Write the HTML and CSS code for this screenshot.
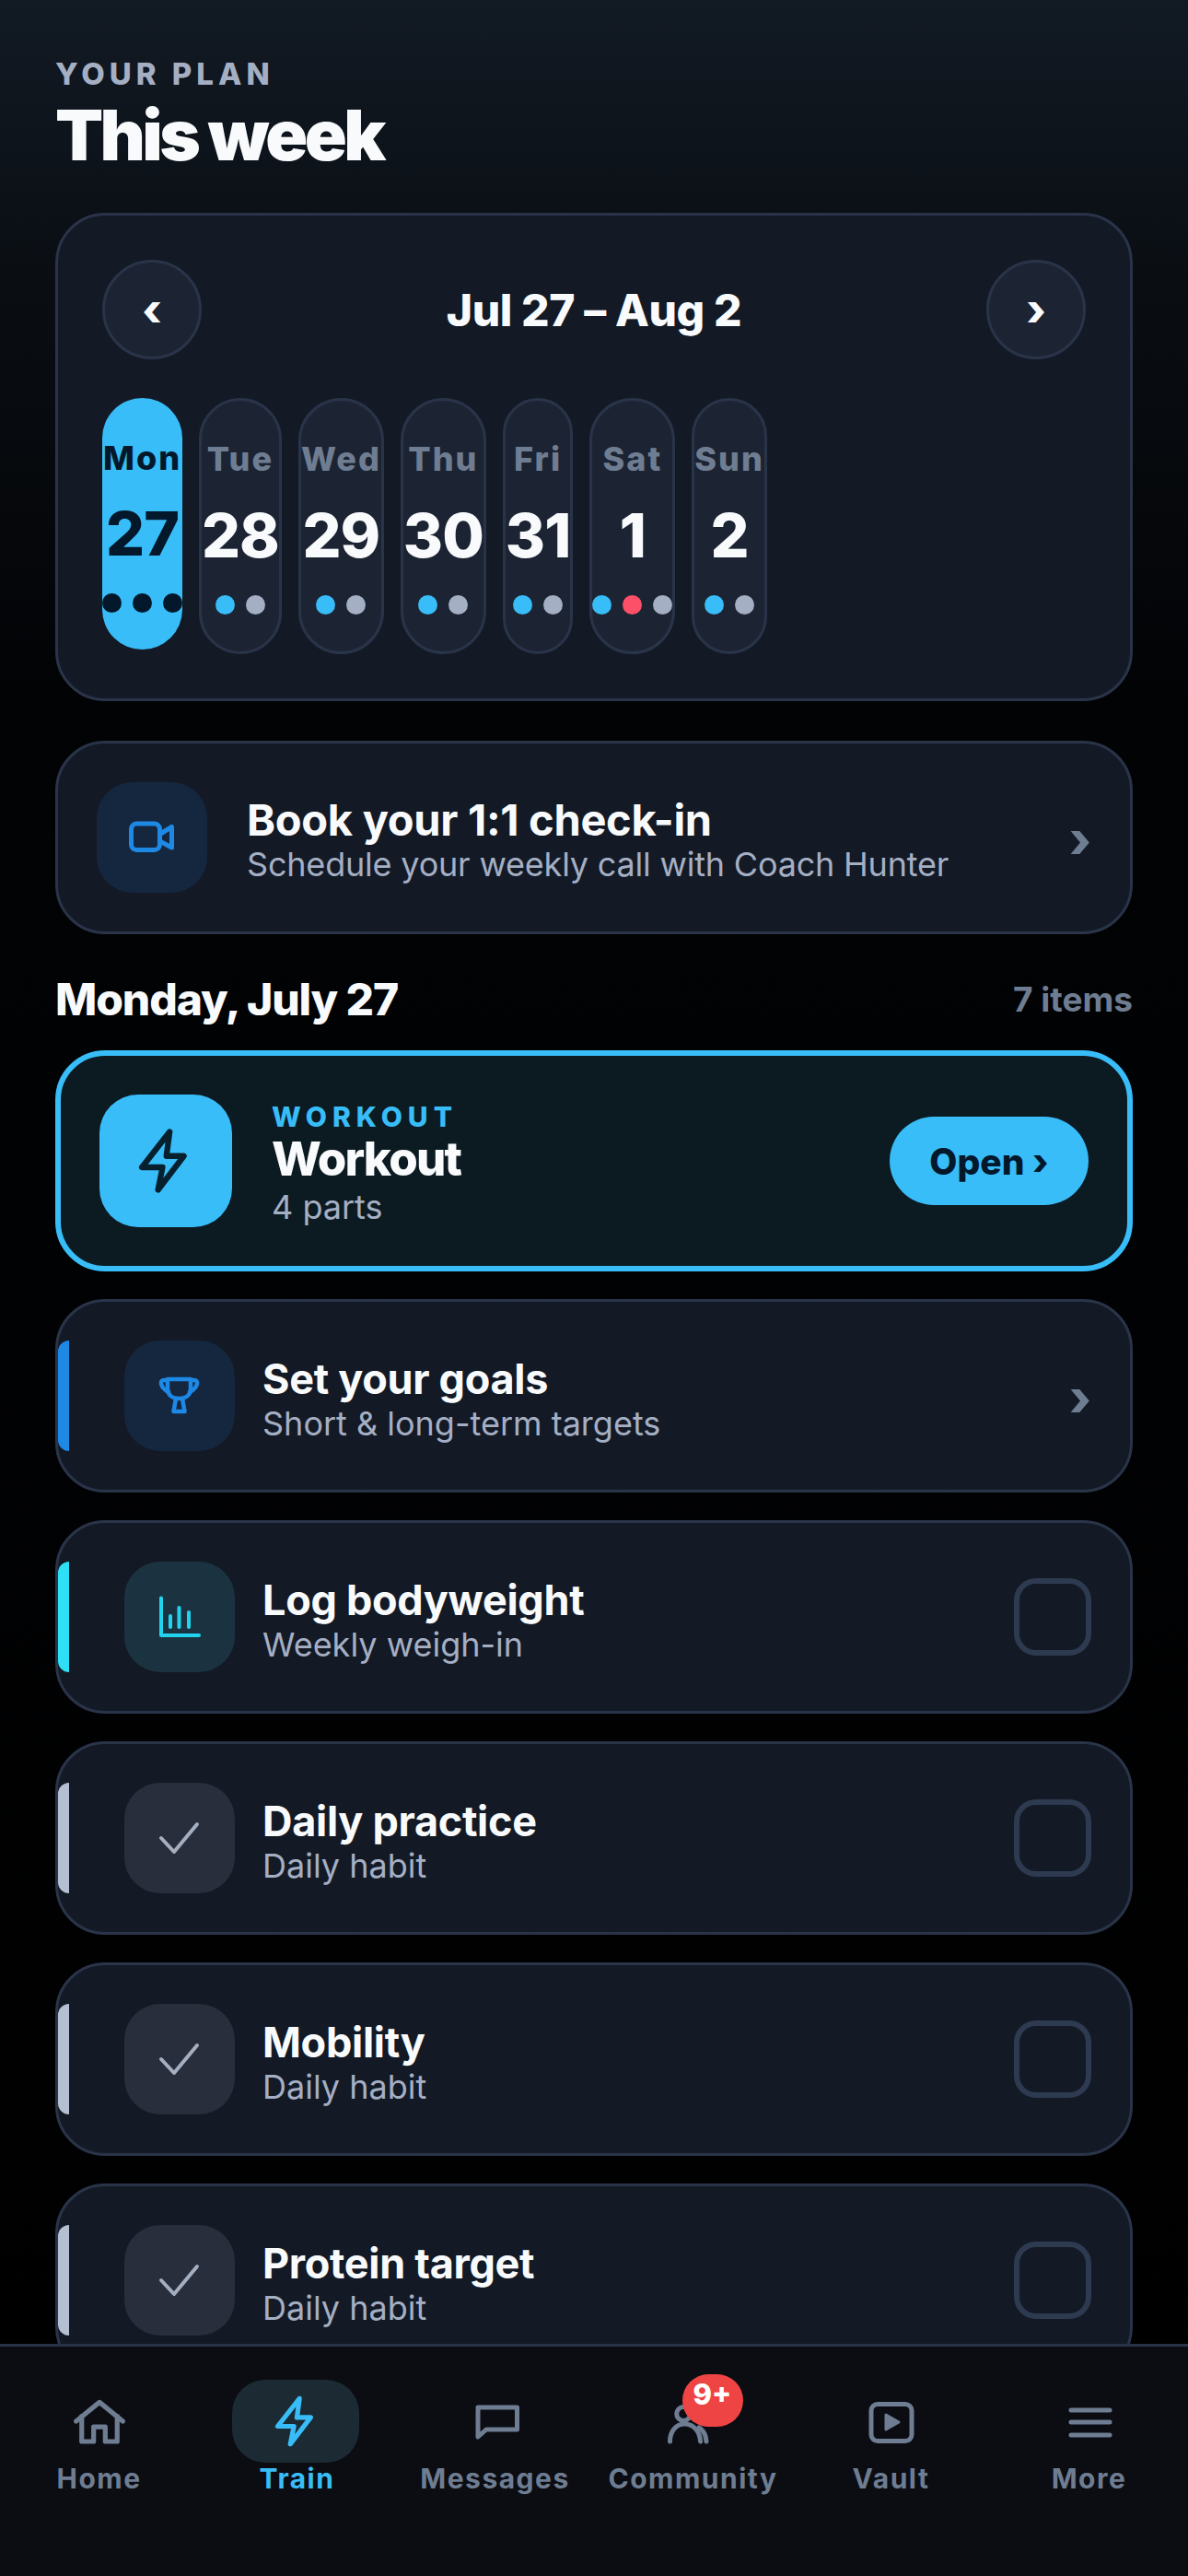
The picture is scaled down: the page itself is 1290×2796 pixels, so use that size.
FILE: index.html
```html
<!DOCTYPE html>
<html lang="en">
<head>
  <meta charset="UTF-8" />
  <meta name="viewport" content="width=device-width, initial-scale=1.0"/>
  <title>Your plan - This week</title>
  <link rel="stylesheet" href="styles.css">
</head>
<body>
  <div class="page">
    <main class="content">
      <header class="top">
        <p class="eyebrow">YOUR PLAN</p>
        <h1>This week</h1>
      </header>

      <section class="card week-card">
        <div class="week-nav">
          <button class="nav-btn">‹</button>
          <h2>Jul 27 – Aug 2</h2>
          <button class="nav-btn">›</button>
        </div>
        <div class="week">
          <div class="day active">
            <span class="day-name">Mon</span>
            <span class="day-num">27</span>
            <span class="dots"><i></i><i></i><i></i></span>
          </div>
          <div class="day">
            <span class="day-name">Tue</span>
            <span class="day-num">28</span>
            <span class="dots"><i class="blue"></i><i class="grey"></i></span>
          </div>
          <div class="day">
            <span class="day-name">Wed</span>
            <span class="day-num">29</span>
            <span class="dots"><i class="blue"></i><i class="grey"></i></span>
          </div>
          <div class="day">
            <span class="day-name">Thu</span>
            <span class="day-num">30</span>
            <span class="dots"><i class="blue"></i><i class="grey"></i></span>
          </div>
          <div class="day">
            <span class="day-name">Fri</span>
            <span class="day-num">31</span>
            <span class="dots"><i class="blue"></i><i class="grey"></i></span>
          </div>
          <div class="day">
            <span class="day-name">Sat</span>
            <span class="day-num">1</span>
            <span class="dots"><i class="blue"></i><i class="red"></i><i class="grey"></i></span>
          </div>
          <div class="day">
            <span class="day-name">Sun</span>
            <span class="day-num">2</span>
            <span class="dots"><i class="blue"></i><i class="grey"></i></span>
          </div>
        </div>
      </section>

      <section class="card row book">
        <div class="icon icon-blue">
          <svg width="60" height="60" viewBox="0 0 60 60" fill="none" stroke="#1e88e5" stroke-width="5" stroke-linecap="round" stroke-linejoin="round">
            <rect x="7.5" y="15" width="31" height="28.5" rx="6"/>
            <path d="M38.5 26.5 51.5 18.5v22.5l-13-7"/>
          </svg>
        </div>
        <div class="row-text">
          <h3>Book your 1:1 check-in</h3>
          <p>Schedule your weekly call with Coach Hunter</p>
        </div>
        <span class="chev">›</span>
      </section>

      <div class="day-head">
        <h2>Monday, July 27</h2>
        <span>7 items</span>
      </div>

      <section class="workout">
        <div class="workout-icon">
          <svg width="84" height="84" viewBox="0 0 24 24" fill="none" stroke="#06202e" stroke-width="1.8" stroke-linecap="round" stroke-linejoin="round">
            <path d="M13.2 3 4.6 14H11l-1.4 7 8-10.5h-5.4z"/>
          </svg>
        </div>
        <div class="workout-text">
          <span class="tag">WORKOUT</span>
          <h3>Workout</h3>
          <p>4 parts</p>
        </div>
        <button class="open-btn">Open ›</button>
      </section>

      <section class="card row task">
        <span class="bar bar-blue"></span>
        <div class="icon icon-blue">
          <svg width="60" height="60" viewBox="0 0 60 60" fill="none" stroke="#1e88e5" stroke-width="4.5" stroke-linecap="round" stroke-linejoin="round">
            <path d="M17 12H42V22C42 29 37 33 29.5 33S17 29 17 22Z"/>
            <path d="M17 13H13C10.5 13 9.5 15 10 17C11 21 14 24 18 26"/>
            <path d="M42 13H46C48.5 13 49.5 15 49 17C48 21 45 24 41 26"/>
            <path d="M26 33 23.5 47H35.5L33 33"/>
          </svg>
        </div>
        <div class="row-text">
          <h3>Set your goals</h3>
          <p>Short &amp; long-term targets</p>
        </div>
        <span class="chev">›</span>
      </section>

      <section class="card row task">
        <span class="bar bar-cyan"></span>
        <div class="icon icon-cyan">
          <svg width="60" height="60" viewBox="0 0 60 60" fill="none" stroke="#22d3ee" stroke-width="4" stroke-linecap="round" stroke-linejoin="round">
            <path d="M10 9.5V50H51"/>
            <path d="M20 29V41M29.5 20V41M40 25V41"/>
          </svg>
        </div>
        <div class="row-text">
          <h3>Log bodyweight</h3>
          <p>Weekly weigh-in</p>
        </div>
        <span class="check"></span>
      </section>

      <section class="card row task">
        <span class="bar bar-grey"></span>
        <div class="icon icon-grey">
          <svg width="60" height="60" viewBox="0 0 60 60" fill="none" stroke="#a5afc0" stroke-width="4" stroke-linecap="round" stroke-linejoin="round">
            <path d="M10 30 24 45 49 15"/>
          </svg>
        </div>
        <div class="row-text">
          <h3>Daily practice</h3>
          <p>Daily habit</p>
        </div>
        <span class="check"></span>
      </section>

      <section class="card row task">
        <span class="bar bar-grey"></span>
        <div class="icon icon-grey">
          <svg width="60" height="60" viewBox="0 0 60 60" fill="none" stroke="#a5afc0" stroke-width="4" stroke-linecap="round" stroke-linejoin="round">
            <path d="M10 30 24 45 49 15"/>
          </svg>
        </div>
        <div class="row-text">
          <h3>Mobility</h3>
          <p>Daily habit</p>
        </div>
        <span class="check"></span>
      </section>

      <section class="card row task">
        <span class="bar bar-grey"></span>
        <div class="icon icon-grey">
          <svg width="60" height="60" viewBox="0 0 60 60" fill="none" stroke="#a5afc0" stroke-width="4" stroke-linecap="round" stroke-linejoin="round">
            <path d="M10 30 24 45 49 15"/>
          </svg>
        </div>
        <div class="row-text">
          <h3>Protein target</h3>
          <p>Daily habit</p>
        </div>
        <span class="check"></span>
      </section>
    </main>

    <nav class="tabs">
      <div class="tab">
        <div class="tab-icon">
          <svg width="66" height="66" viewBox="0 0 24 24" fill="none" stroke="currentColor" stroke-width="1.9" stroke-linecap="round" stroke-linejoin="round">
            <path d="M2.8 12 12 4.5l9.2 7.5"/>
            <path d="M5 10v10h4.7v-5.8h4.6V20H19V10"/>
          </svg>
        </div>
        <span>Home</span>
      </div>
      <div class="tab on">
        <div class="tab-icon">
          <svg width="66" height="66" viewBox="0 0 24 24" fill="none" stroke="currentColor" stroke-width="1.9" stroke-linecap="round" stroke-linejoin="round">
            <path d="M12.8 3 4.2 14h6.4l-1.4 7 8-10.5h-5.4z"/>
          </svg>
        </div>
        <span>Train</span>
      </div>
      <div class="tab">
        <div class="tab-icon">
          <svg width="66" height="66" viewBox="0 0 66 66" fill="none" stroke="currentColor" stroke-width="5" stroke-linecap="round" stroke-linejoin="round">
            <path d="M14 18H56.5V42H23L14 50Z"/>
          </svg>
        </div>
        <span>Messages</span>
      </div>
      <div class="tab">
        <div class="tab-icon">
          <svg width="66" height="66" viewBox="0 0 66 66" fill="none" stroke="currentColor" stroke-width="5" stroke-linecap="round" stroke-linejoin="round">
            <circle cx="22.2" cy="25" r="7.5"/>
            <path d="M7.5 55C7.5 44 14 36 23.5 36S40 44 40.5 55"/>
            <path d="M39 40C44 43 46.5 48 47 55"/>
          </svg>
          <span class="badge">9+</span>
        </div>
        <span>Community</span>
      </div>
      <div class="tab">
        <div class="tab-icon">
          <svg width="66" height="66" viewBox="0 0 66 66" fill="none" stroke="currentColor" stroke-width="5" stroke-linecap="round" stroke-linejoin="round">
            <rect x="11" y="14.5" width="44" height="40" rx="7"/>
            <path d="M27 26 41 34 27 42Z" fill="currentColor" stroke-width="3"/>
          </svg>
        </div>
        <span>Vault</span>
      </div>
      <div class="tab">
        <div class="tab-icon">
          <svg width="66" height="66" viewBox="0 0 66 66" fill="none" stroke="currentColor" stroke-width="5" stroke-linecap="round">
            <path d="M13 21H55M13 34H55M13 48H55"/>
          </svg>
        </div>
        <span>More</span>
      </div>
    </nav>
  </div>
</body>
</html>
```

FILE: styles.css
```css
* {
  margin: 0;
  padding: 0;
  box-sizing: border-box;
  font-family: Inter, "Noto Sans", sans-serif;
}

body {
  background-color: #000;
  color: #f8fafc;
}

.page {
  display: flex;
  flex-direction: column;
  height: 2796px;
  overflow: hidden;
  background: linear-gradient(180deg, #121a24 0, #0a0e13 300px, #020305 760px, #000 100%);
}

.content {
  flex: 1;
  min-height: 0;
  overflow: hidden;
  padding: 60px 60px 0;
}

.top {
  margin-bottom: 42px;
}

.eyebrow {
  font-size: 33px;
  line-height: 40px;
  font-weight: 800;
  letter-spacing: 5px;
  color: #a5afc4;
}

.top h1 {
  margin-top: 3px;
  font-size: 76px;
  line-height: 86px;
  font-weight: 900;
  letter-spacing: -3.6px;
  color: #f8fafc;
}

.card {
  background: #131a26;
  border: 3px solid #2a3449;
  border-radius: 54px;
}

.week-card {
  padding: 48px;
  margin-bottom: 43px;
}

.week-nav {
  display: flex;
  align-items: center;
  justify-content: space-between;
  margin-bottom: 42px;
}

.week-nav h2 {
  font-size: 48px;
  font-weight: 800;
  letter-spacing: -0.4px;
}

.nav-btn {
  width: 108px;
  height: 108px;
  border-radius: 50%;
  border: 3px solid #2a3449;
  background: #1c2433;
  color: #f8fafc;
  font-size: 48px;
  line-height: 92px;
  font-weight: 800;
}

.week {
  display: flex;
  align-items: flex-start;
  gap: 18px;
}

.day {
  display: flex;
  flex-direction: column;
  align-items: center;
  padding: 42px 0 40px;
  background: #1c2433;
  border: 3px solid #2a3449;
  border-radius: 48px;
}

.day.active {
  padding: 44px 0 40px;
  background: #38bdf8;
  border: none;
}

.day-name {
  font-size: 36px;
  line-height: 43px;
  font-weight: 800;
  letter-spacing: 2px;
  color: #6f7d92;
}

.day-num {
  margin-top: 22px;
  font-size: 66px;
  line-height: 79px;
  font-weight: 800;
  letter-spacing: -1px;
  color: #f8fafc;
}

.day.active .day-num {
  margin-top: 21px;
}

.day.active .day-name,
.day.active .day-num {
  color: #03182a;
}

.dots {
  display: flex;
  gap: 12px;
  margin-top: 25px;
}

.dots i {
  width: 21px;
  height: 21px;
  border-radius: 50%;
  background: #03182a;
}

.dots .blue {
  background: #38bdf8;
}

.dots .grey {
  background: #a5afc4;
}

.dots .red {
  background: #fb5067;
}

.row {
  position: relative;
  display: flex;
  align-items: center;
  padding: 42px;
}

.task {
  padding-left: 72px;
  margin-bottom: 30px;
}

.bar {
  position: absolute;
  left: 0;
  top: 42px;
  width: 12px;
  height: 120px;
  border-radius: 12px 0 0 12px;
}

.bar-blue {
  background: #1e88e5;
}

.bar-cyan {
  background: #2ee0f5;
}

.bar-grey {
  background: #b4bfd1;
}

.icon {
  display: flex;
  align-items: center;
  justify-content: center;
  flex: none;
  width: 120px;
  height: 120px;
  border-radius: 39px;
}

.icon-blue {
  background: #15273f;
}

.icon-cyan {
  background: #1b3340;
}

.icon-grey {
  background: #282e3c;
}

.row-text {
  flex: 1;
  margin-left: 30px;
  padding-top: 7px;
}

.book .row-text {
  margin-left: 43px;
  padding-top: 5px;
}

.row-text h3 {
  font-size: 45px;
  line-height: 52px;
  font-weight: 700;
  letter-spacing: -0.3px;
  color: #f8fafc;
}

.book .row-text h3 {
  font-size: 47px;
}

.row-text p {
  font-size: 36px;
  line-height: 44px;
  color: #a5afc4;
}

.book .row-text p {
  letter-spacing: -0.2px;
}

.chev {
  padding-top: 6px;
  font-size: 54px;
  line-height: 54px;
  font-weight: 800;
  color: #6f7d92;
}

.check {
  flex: none;
  width: 84px;
  height: 84px;
  border: 6px solid #2d3a50;
  border-radius: 24px;
}

.day-head {
  display: flex;
  align-items: center;
  justify-content: space-between;
  height: 126px;
  padding-top: 14px;
}

.day-head h2 {
  font-size: 48px;
  font-weight: 800;
  letter-spacing: -1.1px;
}

.day-head span {
  font-size: 37px;
  font-weight: 700;
  color: #6f7d92;
}

.workout {
  display: flex;
  align-items: center;
  padding: 42px;
  margin-bottom: 30px;
  background: #0c1a22;
  border: 6px solid #38bdf8;
  border-radius: 54px;
}

.workout-icon {
  display: flex;
  align-items: center;
  justify-content: center;
  flex: none;
  width: 144px;
  height: 144px;
  border-radius: 42px;
  background: #38bdf8;
}

.workout-text {
  flex: 1;
  margin-left: 43px;
  padding-top: 4px;
}

.tag {
  display: block;
  font-size: 30px;
  line-height: 34px;
  font-weight: 800;
  letter-spacing: 6px;
  color: #38bdf8;
}

.workout-text h3 {
  font-size: 51px;
  line-height: 58px;
  font-weight: 800;
  letter-spacing: -1.8px;
  color: #f8fafc;
}

.workout-text p {
  margin-top: 3px;
  font-size: 36px;
  line-height: 40px;
  color: #a5afc4;
}

.open-btn {
  width: 216px;
  height: 96px;
  border: none;
  border-radius: 48px;
  background: #38bdf8;
  color: #03182a;
  font-size: 39px;
  font-weight: 800;
}

.tabs {
  display: grid;
  grid-template-columns: repeat(6, 1fr);
  flex: none;
  height: 252px;
  padding-top: 48px;
  background: #0b0d12;
  border-top: 3px solid #2a3449;
}

.tab {
  display: flex;
  flex-direction: column;
  align-items: center;
  color: #6f7d92;
}

.tab span {
  font-size: 30px;
  line-height: 36px;
  font-weight: 700;
  letter-spacing: 1.5px;
  margin-top: 11px;
}

.tab-icon {
  position: relative;
  width: 66px;
  height: 66px;
}

.tab-icon svg {
  display: block;
}

.tab.on {
  color: #38bdf8;
}

.tab.on .tab-icon::before {
  content: "";
  position: absolute;
  left: -38px;
  top: -12px;
  width: 138px;
  height: 90px;
  border-radius: 36px;
  background: #1c2a33;
}

.tab.on svg {
  position: relative;
}

.tab span.badge {
  position: absolute;
  left: 21px;
  top: -18px;
  width: 66px;
  height: 57px;
  margin: 0;
  border-radius: 29px;
  background: #ef4444;
  color: #fff;
  font-size: 31px;
  line-height: 44px;
  font-weight: 800;
  letter-spacing: 0;
  text-align: center;
}
```
